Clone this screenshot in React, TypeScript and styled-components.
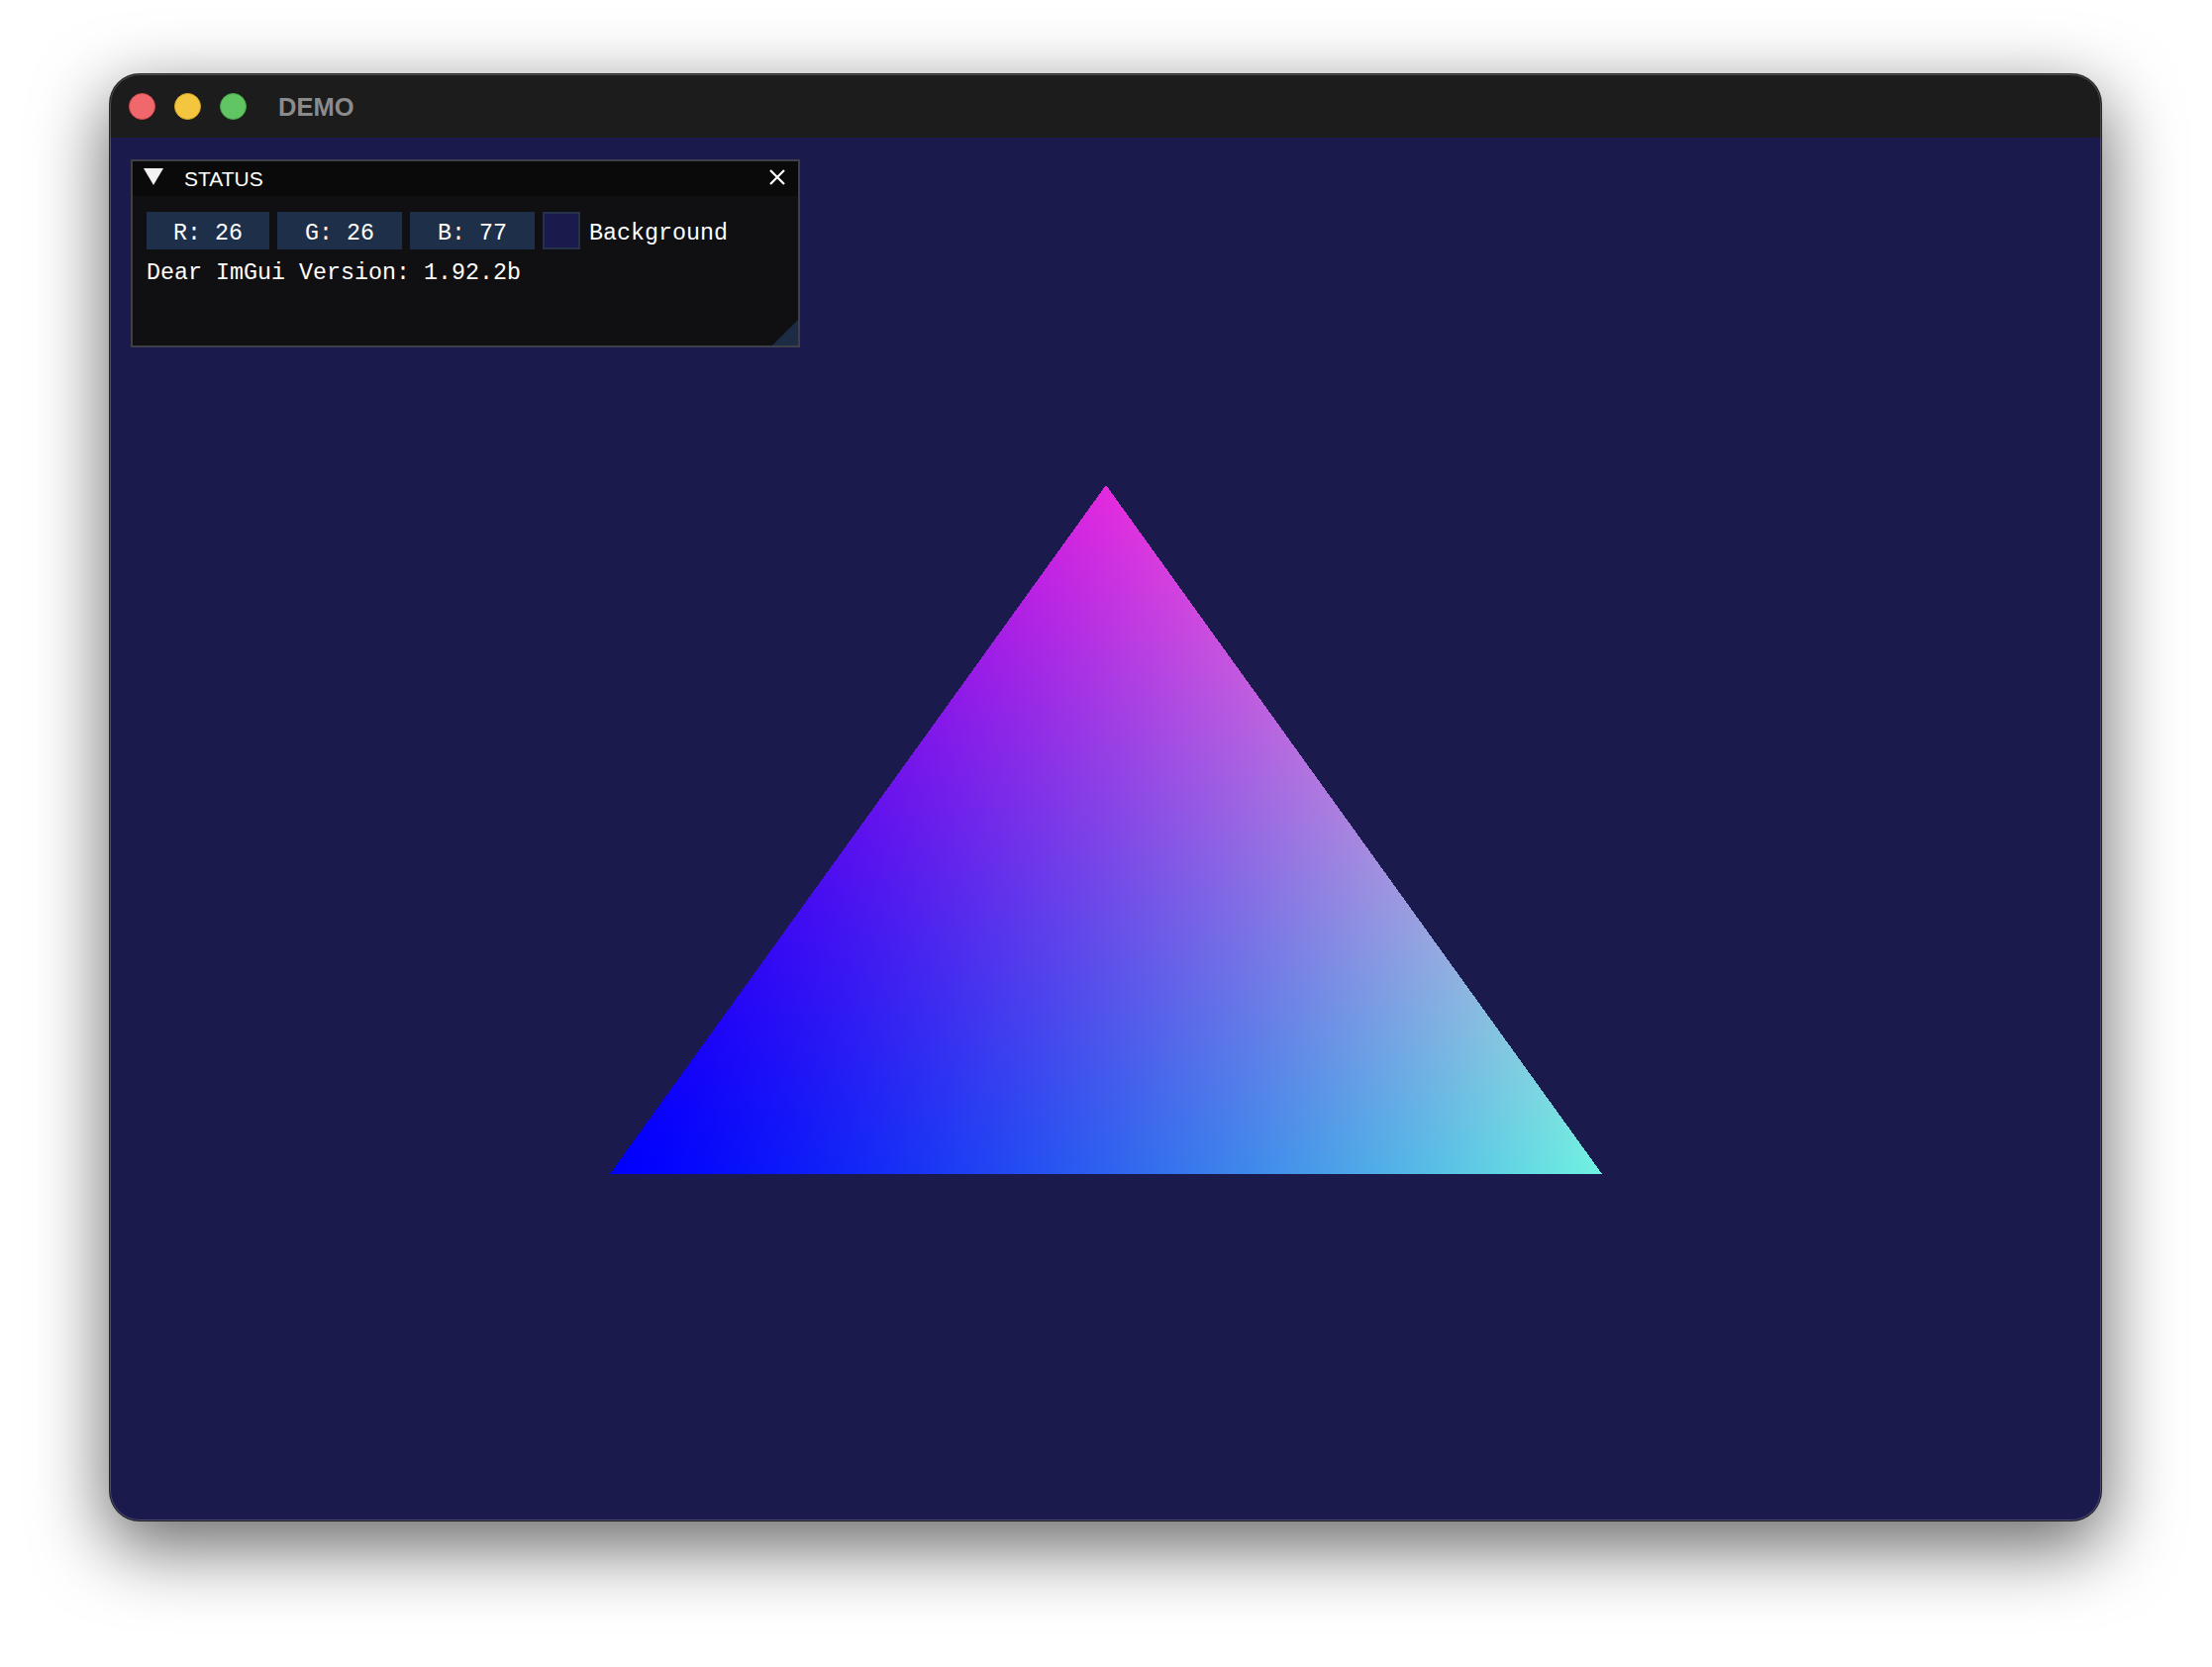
import React from 'react';
import styled, { createGlobalStyle } from 'styled-components';

const GlobalStyle = createGlobalStyle`
  html, body { margin: 0; padding: 0; background: #ffffff; }
  #root { width: 2234px; height: 1684px; }
`;

const Page = styled.div`
  width: 2234px;
  height: 1684px;
  box-sizing: border-box;
  padding: 75px 112px 148px 111px;
  display: flex;
`;

const Window = styled.div`
  flex: 1;
  display: flex;
  flex-direction: column;
  position: relative;
  border-radius: 30px;
  overflow: hidden;
  background: #1a1a4d;
  box-shadow: 0 0 0 1px rgba(0, 0, 0, 0.8), 0 24px 72px 4px rgba(0, 0, 0, 0.58);
  &::after {
    content: '';
    position: absolute;
    inset: 0;
    border-radius: inherit;
    box-shadow: inset 0 0 0 1px rgba(255, 255, 255, 0.22);
    pointer-events: none;
  }
`;

const TitleBar = styled.div`
  height: 64px;
  flex: none;
  background: #1c1c1c;
  display: flex;
  align-items: center;
  padding-left: 19px;
`;

const Lights = styled.div`
  display: flex;
  gap: 19px;
`;

const Light = styled.div<{ $fill: string; $edge: string }>`
  width: 27px;
  height: 27px;
  box-sizing: border-box;
  border-radius: 50%;
  background: ${(p) => p.$fill};
  border: 1px solid ${(p) => p.$edge};
`;

const AppTitle = styled.div`
  margin-left: 32px;
  margin-top: 2px;
  font-family: 'Liberation Sans', Arial, sans-serif;
  font-weight: 700;
  font-size: 25.5px;
  color: #8b8b8b;
`;

const Canvas = styled.div`
  flex: 1;
  min-height: 0;
  position: relative;
  display: grid;
`;

const Scene = styled.svg`
  width: 100%;
  height: 100%;
  display: block;
`;

const Layer = styled.polygon`
  mix-blend-mode: plus-lighter;
`;

const Panel = styled.div`
  position: absolute;
  left: 21px;
  top: 22px;
  width: 676px;
  height: 190px;
  box-sizing: border-box;
  border: 2px solid #3f3f49;
  background: #101013;
  display: flex;
  flex-direction: column;
`;

const PanelTitle = styled.div`
  height: 35px;
  flex: none;
  background: #0a0a0a;
  display: flex;
  align-items: center;
  padding: 0 13px 0 11px;
`;

const PanelTitleText = styled.div`
  margin-left: 21px;
  flex: 1;
  font-family: 'Liberation Sans', Arial, sans-serif;
  font-size: 21px;
  color: #ffffff;
`;

const Arrow = styled.svg`
  width: 20px;
  height: 17px;
  margin-top: -4px;
  display: block;
`;

const CloseIcon = styled.svg`
  width: 16px;
  height: 16px;
  margin-top: -3px;
  display: block;
`;

const PanelBody = styled.div`
  padding: 16px 14px;
  display: flex;
  flex-direction: column;
  gap: 8px;
`;

const Row = styled.div`
  display: flex;
  align-items: center;
  gap: 8px;
  height: 38px;
`;

const mono = `'Liberation Mono', 'DejaVu Sans Mono', monospace`;

const Field = styled.div<{ $w: number }>`
  width: ${(p) => p.$w}px;
  height: 38px;
  box-sizing: border-box;
  padding-top: 5px;
  background: #1d2f49;
  display: flex;
  align-items: center;
  justify-content: center;
  font-family: ${mono};
  font-size: 23.33px;
  line-height: 26px;
  color: #ffffff;
  white-space: pre;
`;

const Swatch = styled.div<{ $c: string }>`
  width: 38px;
  height: 38px;
  box-sizing: border-box;
  border: 2px solid #26314a;
  background: ${(p) => p.$c};
`;

const Label = styled.div`
  margin-left: 1px;
  padding-top: 5px;
  font-family: ${mono};
  font-size: 23.33px;
  line-height: 26px;
  color: #ffffff;
  white-space: pre;
`;

const InfoText = styled.div`
  padding-top: 3px;
  font-family: ${mono};
  font-size: 23.33px;
  line-height: 26px;
  color: #ffffff;
  white-space: pre;
`;

const Grip = styled.div`
  position: absolute;
  right: 0;
  bottom: 0;
  width: 26px;
  height: 26px;
  background: #1c2c44;
  clip-path: polygon(100% 0, 100% 100%, 0 100%);
`;

type V = { x: number; y: number; rgb: [number, number, number] };

const W = 2011;
const H = 1397;
const GAMMA = 1.3;
const verts: V[] = [
  { x: 1006, y: 351, rgb: [229, 42, 223] },
  { x: 505, y: 1047, rgb: [0, 0, 255] },
  { x: 1507, y: 1047, rgb: [112, 243, 226] },
];

// vertex colour expressed in the space where it is interpolated
const enc = (c: [number, number, number]) =>
  `rgb(${c.map((v) => Math.round(255 * Math.pow(v / 255, 1 / GAMMA))).join(',')})`;

function foot(p: V, a: V, b: V) {
  const dx = b.x - a.x;
  const dy = b.y - a.y;
  const t = ((p.x - a.x) * dx + (p.y - a.y) * dy) / (dx * dx + dy * dy);
  return { x: a.x + t * dx, y: a.y + t * dy };
}

const Triangle: React.FC = () => {
  const pts = verts.map((v) => `${v.x},${v.y}`).join(' ');
  return (
    <Scene viewBox={`0 0 ${W} ${H}`} preserveAspectRatio="none">
      <defs>
        {verts.map((v, i) => {
          const a = verts[(i + 1) % 3];
          const b = verts[(i + 2) % 3];
          const f = foot(v, a, b);
          return (
            <linearGradient
              key={i}
              id={`vg${i}`}
              gradientUnits="userSpaceOnUse"
              x1={v.x}
              y1={v.y}
              x2={f.x}
              y2={f.y}
            >
              <stop offset="0" stopColor={enc(v.rgb)} />
              <stop offset="1" stopColor="#000000" />
            </linearGradient>
          );
        })}
        <filter id="decode" colorInterpolationFilters="sRGB">
          <feComponentTransfer>
            <feFuncR type="gamma" amplitude="1" exponent={GAMMA} offset="0" />
            <feFuncG type="gamma" amplitude="1" exponent={GAMMA} offset="0" />
            <feFuncB type="gamma" amplitude="1" exponent={GAMMA} offset="0" />
          </feComponentTransfer>
        </filter>
      </defs>
      <g filter="url(#decode)" style={{ isolation: 'isolate' }}>
        {verts.map((_, i) => (
          <Layer key={i} points={pts} fill={`url(#vg${i})`} shapeRendering="crispEdges" />
        ))}
      </g>
    </Scene>
  );
};

const StatusPanel: React.FC = () => (
  <Panel>
    <PanelTitle>
      <Arrow viewBox="0 0 20 17">
        <polygon points="0,0 20,0 10,17" fill="#f2f2f2" />
      </Arrow>
      <PanelTitleText>STATUS</PanelTitleText>
      <CloseIcon viewBox="0 0 16 16">
        <path d="M1 1 L15 15 M15 1 L1 15" stroke="#ffffff" strokeWidth="2.2" />
      </CloseIcon>
    </PanelTitle>
    <PanelBody>
      <Row>
        <Field $w={124}>R: 26</Field>
        <Field $w={126}>G: 26</Field>
        <Field $w={126}>B: 77</Field>
        <Swatch $c="#1a1a4d" />
        <Label>Background</Label>
      </Row>
      <InfoText>Dear ImGui Version: 1.92.2b</InfoText>
    </PanelBody>
    <Grip />
  </Panel>
);

export default function App() {
  return (
    <>
      <GlobalStyle />
      <Page>
        <Window>
          <TitleBar>
            <Lights>
              <Light $fill="#f0686c" $edge="#d24c50" />
              <Light $fill="#f4c63f" $edge="#d8a826" />
              <Light $fill="#61c564" $edge="#44a747" />
            </Lights>
            <AppTitle>DEMO</AppTitle>
          </TitleBar>
          <Canvas>
            <Triangle />
            <StatusPanel />
          </Canvas>
        </Window>
      </Page>
    </>
  );
}
